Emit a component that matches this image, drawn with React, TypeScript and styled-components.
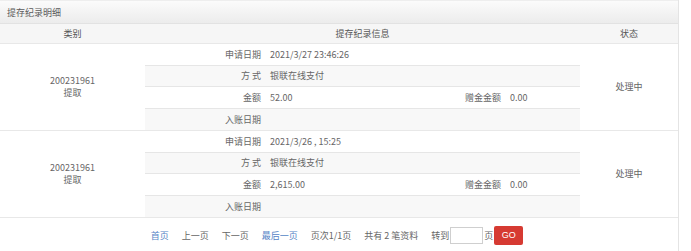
import React from "react";
import styled, { createGlobalStyle } from "styled-components";

const Global = createGlobalStyle`
  html, body { margin: 0; padding: 0; background: #fff; }
  body { font-family: "Noto Sans CJK SC", "Liberation Sans", sans-serif; font-size: 9px; color: #666; }
`;

const Panel = styled.div`
  width: 679px;
  border-right: 1px solid #e4e4e4;
  height: 251px;
  box-sizing: border-box;
`;

const PanelHeader = styled.div`
  height: 24px;
  box-sizing: border-box;
  border-top: 1px solid #eee;
  border-bottom: 1px solid #e2e2e2;
  background: linear-gradient(#fbfbfb, #ececec);
  padding-left: 7px;
  display: flex;
  align-items: center;
  color: #5a5a5a;
  font-size: 9px;
`;

const Row = styled.div`
  display: grid;
  grid-template-columns: 145px 435px 1fr;
`;

const HeadRow = styled(Row)`
  height: 20px;
  background: #f6f6f6;
  border-bottom: 1px solid #e8e8e8;
  box-sizing: border-box;
`;

const HeadCell = styled.div`
  display: flex;
  align-items: center;
  justify-content: center;
  color: #555;
`;

const RecordRow = styled(Row)`
  height: 87px;
  border-bottom: 1px solid #e8e8e8;
  box-sizing: border-box;
`;

const CenterCell = styled.div`
  display: flex;
  flex-direction: column;
  align-items: center;
  justify-content: center;
  line-height: 12px;
  color: #666;
`;

const Info = styled.div`
  display: grid;
  grid-template-columns: 120px 165px 75px 75px;
  grid-auto-rows: 1fr;
`;

const InfoRow = styled.div<{ $alt?: boolean; $last?: boolean }>`
  display: contents;
  & > div {
    background: ${(p) => (p.$alt ? "#f8f8f8" : "#fff")};
    border-bottom: ${(p) => (p.$last ? "none" : "1px solid #e6e6e6")};
  }
`;

const Label = styled.div`
  display: flex;
  align-items: center;
  justify-content: flex-end;
  padding-right: 4px;
  color: #666;
`;

const Value = styled.div<{ $span?: number }>`
  display: flex;
  align-items: center;
  padding-left: 5px;
  grid-column: span ${(p) => p.$span ?? 1};
  color: #666;
`;

const Pager = styled.div`
  height: 34px;
  display: flex;
  align-items: center;
  justify-content: center;
  gap: 13px;
  padding-right: 4px;
  color: #666;
`;

const PageLink = styled.span<{ $blue?: boolean }>`
  color: ${(p) => (p.$blue ? "#5583c6" : "#666")};
`;

const Jump = styled.span`
  display: flex;
  align-items: center;
`;

const PageInput = styled.span`
  display: inline-block;
  width: 31px;
  height: 15px;
  border: 1px solid #cfcfcf;
  margin: 0 1px 0 1px;
  background: #fff;
`;

const GoButton = styled.span`
  display: inline-flex;
  align-items: center;
  justify-content: center;
  width: 29px;
  height: 19px;
  margin-left: 1px;
  background: #d63a32;
  border-radius: 2px;
  color: #fff;
  font-family: "Liberation Sans", sans-serif;
  font-size: 9px;
`;

type Rec = { id: string; date: string; amount: string };

const records: Rec[] = [
  { id: "200231961", date: "2021/3/27 23:46:26", amount: "52.00" },
  { id: "200231961", date: "2021/3/26 , 15:25", amount: "2,615.00" },
];

function Record({ r }: { r: Rec }) {
  return (
    <RecordRow>
      <CenterCell>
        <div>{r.id}</div>
        <div>提取</div>
      </CenterCell>
      <Info>
        <InfoRow>
          <Label>申请日期</Label>
          <Value $span={3}>{r.date}</Value>
        </InfoRow>
        <InfoRow $alt>
          <Label>方 式</Label>
          <Value $span={3}>银联在线支付</Value>
        </InfoRow>
        <InfoRow>
          <Label>金额</Label>
          <Value>{r.amount}</Value>
          <Label>赠金金额</Label>
          <Value>0.00</Value>
        </InfoRow>
        <InfoRow $alt $last>
          <Label>入账日期</Label>
          <Value $span={3}></Value>
        </InfoRow>
      </Info>
      <CenterCell>处理中</CenterCell>
    </RecordRow>
  );
}

export default function App() {
  return (
    <>
      <Global />
      <Panel>
        <PanelHeader>提存纪录明细</PanelHeader>
        <HeadRow>
          <HeadCell>类别</HeadCell>
          <HeadCell>提存纪录信息</HeadCell>
          <HeadCell>状态</HeadCell>
        </HeadRow>
        {records.map((r, i) => (
          <Record key={i} r={r} />
        ))}
        <Pager>
          <PageLink $blue>首页</PageLink>
          <PageLink>上一页</PageLink>
          <PageLink>下一页</PageLink>
          <PageLink $blue>最后一页</PageLink>
          <PageLink>页次1/1页</PageLink>
          <PageLink>共有 2 笔资料</PageLink>
          <Jump>
            转到<PageInput />页<GoButton>GO</GoButton>
          </Jump>
        </Pager>
      </Panel>
    </>
  );
}
